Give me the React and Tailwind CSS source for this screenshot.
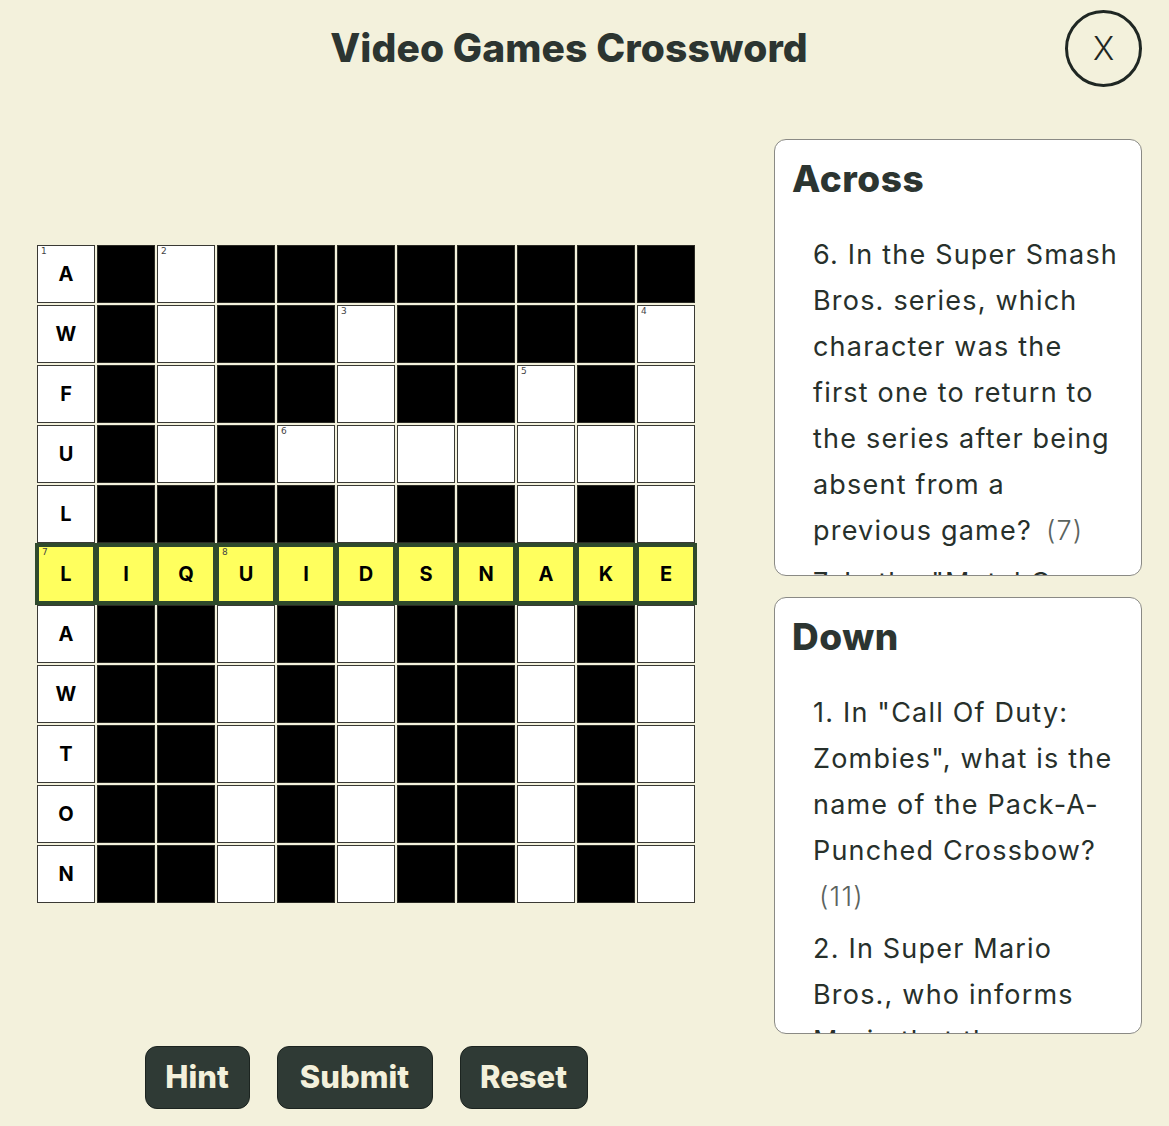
import React from "react";

const G = [
  "A#.########",
  "W#.##.####.",
  "F#.##.##.#.",
  "U#.#.......",
  "L####.##.#.",
  "LIQUIDSNAKE",
  "A##.#.##.#.",
  "W##.#.##.#.",
  "T##.#.##.#.",
  "O##.#.##.#.",
  "N##.#.##.#.",
];

const NUMS = {
  "0-0": 1,
  "0-2": 2,
  "1-5": 3,
  "1-10": 4,
  "2-8": 5,
  "3-4": 6,
  "5-0": 7,
  "5-3": 8,
};

function Cell({ ch, r, c }) {
  const num = NUMS[`${r}-${c}`];
  if (ch === "#") {
    return <div className="w-[58px] h-[58px] bg-black border border-[#2b2b25]" />;
  }
  const hl = r === 5;
  const letter = ch === "." ? "" : ch;
  return (
    <div
      className={
        hl
          ? "relative w-[58px] h-[58px] bg-[#ffff5e] border-2 border-[#2f4a2c] ring-2 ring-[#2f4a2c] flex items-center justify-center"
          : "relative w-[58px] h-[58px] bg-white border border-[#3a3a35] flex items-center justify-center"
      }
    >
      {num ? (
        <span className="absolute left-[3px] top-[1px] text-[9px] leading-none text-[#444] font-['DejaVu_Sans',sans-serif]">
          {num}
        </span>
      ) : null}
      <span className="text-[20px] font-bold text-black">{letter}</span>
    </div>
  );
}

function Panel({ title, clues }) {
  return (
    <div className="h-[437px] w-[368px] bg-white border border-[#8a8a85] rounded-[12px] overflow-hidden pl-[17px]">
      <h2 className="text-[37px] font-extrabold tracking-[0.5px] text-[#2c3531] mt-[17px] leading-[44px]">{title}</h2>
      <div className="mt-[31px] pl-[21px] text-[27px] leading-[46px] tracking-[1.2px] text-[#27302b]">
        {clues.map((cl, i) => (
          <div key={i} className="mb-[6px]">
            {cl.lines.map((l, j) => (
              <div key={j} className="whitespace-nowrap">
                {l}
                {j === cl.lines.length - 1 && cl.len ? (
                  <span className="ml-[14px] font-light text-[#5b635e]">{cl.len}</span>
                ) : null}
              </div>
            ))}
            {cl.lenLine ? (
              <div className="pl-[6px] font-light text-[#5b635e]">{cl.lenLine}</div>
            ) : null}
          </div>
        ))}
      </div>
    </div>
  );
}

export default function App() {
  const across = [
    {
      lines: [
        "6. In the Super Smash",
        "Bros. series, which",
        "character was the",
        "first one to return to",
        "the series after being",
        "absent from a",
        "previous game?",
      ],
      len: "(7)",
    },
    { lines: ['7. In the "Metal Gear', "Solid\" series"] },
  ];
  const down = [
    {
      lines: [
        '1. In "Call Of Duty:',
        'Zombies", what is the',
        "name of the Pack-A-",
        "Punched Crossbow?",
      ],
      lenLine: "(11)",
    },
    { lines: ["2. In Super Mario", "Bros., who informs", "Mario that the"] },
  ];
  return (
    <div className="relative w-[1169px] h-[1126px] bg-[#f3f1dc] font-['Inter',sans-serif] text-[#2c3531] overflow-hidden">
      <header className="h-[96px] flex items-center justify-center pr-[31px]">
        <h1 className="text-[39px] font-extrabold tracking-[0.1px] text-[#2c3531]">Video Games Crossword</h1>
      </header>
      <button className="absolute left-[1065px] top-[10px] w-[77px] h-[77px] rounded-full border-[3px] border-[#1f2723] flex items-center justify-center text-[32px] font-light text-[#1f2723]">
        X
      </button>
      <main className="flex">
        <div className="ml-[37px] w-[658px] flex flex-col items-center">
          <div className="mt-[149px] grid grid-cols-[repeat(11,58px)] gap-[2px]">
            {G.map((row, r) =>
              row.split("").map((ch, c) => <Cell key={`${r}-${c}`} ch={ch} r={r} c={c} />)
            )}
          </div>
          <div className="mt-[143px] flex gap-[27px]">
            <button className="h-[63px] w-[105px] rounded-[12px] bg-[#2f3a35] border border-[#1c2420] text-[#f3f0db] text-[31px] font-extrabold">Hint</button>
            <button className="h-[63px] w-[156px] rounded-[12px] bg-[#2f3a35] border border-[#1c2420] text-[#f3f0db] text-[31px] font-extrabold">Submit</button>
            <button className="h-[63px] w-[128px] rounded-[12px] bg-[#2f3a35] border border-[#1c2420] text-[#f3f0db] text-[31px] font-extrabold">Reset</button>
          </div>
        </div>
        <div className="ml-[79px] mt-[43px] flex flex-col gap-[21px]">
          <Panel title="Across" clues={across} />
          <Panel title="Down" clues={down} />
        </div>
      </main>
    </div>
  );
}
